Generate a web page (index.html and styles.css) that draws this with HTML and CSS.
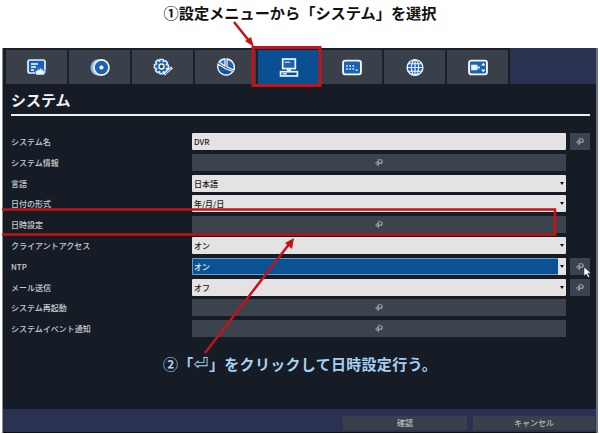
FILE: index.html
```html
<!DOCTYPE html>
<html lang="ja">

<head>
  <meta charset="UTF-8">
  <title>システム</title>
  <link rel="stylesheet" href="styles.css">
</head>

<body>
  <svg width="0" height="0" class="defs">
    <symbol id="enter" viewBox="0 0 12 10">
      <path d="M10.5 1.5V6H4" fill="none" stroke="currentColor" stroke-width="1.3"/>
      <path d="M5 2.5 1 6l4 3.5z" fill="none" stroke="currentColor" stroke-width="1.1"/>
      <path d="M4 1h6" fill="none" stroke="currentColor" stroke-width="1"/>
    </symbol>
  </svg>

  <h2 class="caption">①設定メニューから「システム」を選択</h2>

  <div class="app">
    <div class="tabs">
      <div class="tab">
        <svg class="icon" viewBox="0 0 20 17">
          <rect x="1" y="1" width="17" height="13" rx="2" fill="#1a62b8" stroke="#e6f0fa" stroke-width="1.7"/>
          <path d="M4 5h7M4 8h5M4 11h3" stroke="#fff" stroke-width="1.3"/>
          <path d="M9 16l-1-5 2 1 1-4 1 3 1.500-3 1 3 1.500-2 .5 3 2.500-1-2 5z" fill="#eaf3fb" stroke="#1a4f90" stroke-width=".5"/>
        </svg>
      </div>
      <div class="tab">
        <svg class="icon" viewBox="0 0 21 18">
          <circle cx="9" cy="9" r="8.600" fill="#8fb6e0"/>
          <circle cx="12" cy="9" r="8.800" fill="#f0f6fc"/>
          <circle cx="12" cy="9" r="7" fill="#1a62b8"/>
          <circle cx="12" cy="9" r="2.200" fill="#fff"/>
        </svg>
      </div>
      <div class="tab">
        <svg class="icon" viewBox="0 0 20 18">
          <path d="M7 1h3l.5 2 2-.8 2 2-1 1.800 2 .8v3l-2 .5.8 2-2 2-1.800-1-.8 2H7l-.5-2-2 .8-2-2 1-1.800-2-.8V6l2-.5-.8-2 2-2 1.800 1z" fill="#1a62b8" stroke="#dcebf8" stroke-width="1.600"/>
          <circle cx="8.500" cy="8" r="2.500" fill="#3a4049" stroke="#eaf3fb" stroke-width="1.400"/>
          <path d="M11 16l8-7" stroke="#f0f6fc" stroke-width="2.600"/>
          <path d="M12 15.500l6-5.500" stroke="#1a62b8" stroke-width="1"/>
        </svg>
      </div>
      <div class="tab">
        <svg class="icon" viewBox="0 0 20 19">
          <path d="M9 1A8 8 0 0 0 3 4l6 4z" fill="#2a78cc" stroke="#f0f6fc" stroke-width="1.300"/>
          <path d="M11 1v8l7 3a8.500 8.500 0 0 0-7-11z" fill="#1a62b8" stroke="#f0f6fc" stroke-width="1.300"/>
          <path d="M2 6l8 5 7 2.500A8.500 8.500 0 0 1 2 6z" fill="#14559f" stroke="#f0f6fc" stroke-width="1.300"/>
        </svg>
      </div>
      <div class="tab active">
        <svg class="icon" viewBox="0 0 18 18">
          <rect x="3" y="1" width="12" height="9" fill="#1a62b8" stroke="#eef5fb" stroke-width="1.600"/>
          <path d="M5 4h5" stroke="#eef5fb"/>
          <path d="M7 10.500v2h4v-2" fill="#eef5fb"/>
          <rect x="1" y="13" width="16" height="4" fill="#0b4f93" stroke="#eef5fb" stroke-width="1.600"/>
          <path d="M3 15h4" stroke="#eef5fb" stroke-width="1.300"/>
        </svg>
      </div>
      <div class="tab">
        <svg class="icon" viewBox="0 0 19 15">
          <rect x="1" y="1" width="17" height="13" rx="2" fill="#1a62b8" stroke="#f0f6fc" stroke-width="1.800"/>
          <path d="M4 6h1.500M7 6h1.500M10 6h1.500M4 9h1.500M7 9h1.500M10 9h1.500M13 10h2" stroke="#fff" stroke-width="1.400"/>
        </svg>
      </div>
      <div class="tab">
        <svg class="icon" viewBox="0 0 18 20">
          <circle cx="9" cy="10" r="8.300" fill="#1a62b8" stroke="#f0f6fc" stroke-width="1.500"/>
          <ellipse cx="9" cy="10" rx="3.800" ry="8.300" fill="none" stroke="#f0f6fc" stroke-width="1.200"/>
          <path d="M9 2v16M1 10h16M2 6h14M2 14h14" stroke="#f0f6fc" stroke-width="1.200"/>
        </svg>
      </div>
      <div class="tab">
        <svg class="icon" viewBox="0 0 19 15">
          <rect x="1" y="1" width="17" height="13" rx="2" fill="#1a62b8" stroke="#f0f6fc" stroke-width="1.800"/>
          <path d="M3 5h6v5H3zM9 7l2-1v3l-2-1z" fill="#eaf3fb"/>
          <path d="M14.500 3l-2 2.500h4zM14.500 12l-2-2.500h4z" fill="#fff"/>
        </svg>
      </div>
      <div class="tab-rest"></div>
    </div>

    <div class="panel">
      <h1 class="title">システム</h1>

      <div class="rows">
        <span class="label">システム名</span>
        <div class="field">DVR</div>
        <button class="side"><svg class="enter"><use href="#enter"/></svg></button>

        <span class="label">システム情報</span>
        <button class="wide"><svg class="enter"><use href="#enter"/></svg></button>
        <span></span>

        <span class="label">言語</span>
        <div class="field select">日本語</div>
        <span></span>

        <span class="label">日付の形式</span>
        <div class="field select">年/月/日</div>
        <span></span>

        <span class="label">日時設定</span>
        <button class="wide"><svg class="enter"><use href="#enter"/></svg></button>
        <span></span>

        <span class="label">クライアントアクセス</span>
        <div class="field select">オン</div>
        <span></span>

        <span class="label">NTP</span>
        <div class="field select focus">オン</div>
        <button class="side"><svg class="enter"><use href="#enter"/></svg></button>

        <span class="label">メール送信</span>
        <div class="field select">オフ</div>
        <button class="side"><svg class="enter"><use href="#enter"/></svg></button>

        <span class="label">システム再起動</span>
        <button class="wide"><svg class="enter"><use href="#enter"/></svg></button>
        <span></span>

        <span class="label">システムイベント通知</span>
        <button class="wide"><svg class="enter"><use href="#enter"/></svg></button>
        <span></span>
      </div>

      <p class="note">②「<span class="note-key">⏎</span>」をクリックして日時設定行う。</p>
    </div>

    <div class="footer">
      <button class="foot-btn ok">確認</button>
      <button class="foot-btn cancel">キャンセル</button>
    </div>
  </div>

  <!-- red marks drawn on top of the screenshot -->
  <svg class="marks" width="600" height="434" viewBox="0 0 600 434">
    <rect x="253" y="47.500" width="67" height="38" fill="none" stroke="#c2141a" stroke-width="3"/>
    <path d="M2 209.500H555V234.500H2" fill="none" stroke="#c2141a" stroke-width="2.500"/>
    <path d="M234 22 250 42" stroke="#c2141a" stroke-width="2.500"/>
    <path d="M254 47 245 41 251 37z" fill="#c2141a"/>
    <path d="M205 353 290 243" stroke="#c2141a" stroke-width="2.500"/>
    <path d="M294 238 292 249 285 243z" fill="#c2141a"/>
    <path d="M584 267v9l2.200-2 2 3.500 1.500-.8-2-3.400 3-.4z" fill="#fff" stroke="#222" stroke-width=".5"/>
  </svg>
</body>

</html>
```

FILE: styles.css
```css
body {
  margin: 0;
  width: 600px;
  height: 434px;
  overflow: hidden;
  background-color: white;
  font-family: "Noto Sans CJK JP", "Noto Sans", sans-serif;
  position: relative;
}

button {
  font-family: inherit;
  padding: 0;
  border: none;
}

.defs {
  position: absolute;
}

.caption {
  margin: 0;
  height: 48px;
  box-sizing: border-box;
  padding-top: 1px;
  line-height: 22px;
  font-size: 15.2px;
  font-weight: 700;
  text-align: center;
  color: #111;
}

.app {
  margin: 0 2px;
  height: 385px;
  display: flex;
  flex-direction: column;
  background-color: #2b3150;
  border-right: 2px solid #6c7078;
  box-sizing: border-box;
  border-left: 1px solid #8b8f96;
}

.tabs {
  display: flex;
  height: 36px;
  flex-shrink: 0;
  gap: 2px;
  padding: 2px 0 0 3px;
  box-sizing: border-box;
  background-color: #1b1f2a;
}

.tab {
  width: 61px;
  display: flex;
  align-items: center;
  justify-content: center;
  background-color: #3a4049;
}

.tab.active {
  background-color: #0b4f93;
}

.tab-rest {
  flex: 1;
  margin: -2px 0 0 0;
  background-color: #2b3150;
}

.icon {
  width: 20px;
  height: 19px;
}

.panel {
  flex: 1;
  background-color: #161c25;
  padding: 0 6px 0 8px;
}

.title {
  margin: 0 0 17px;
  padding: 5px 0 3px 0;
  height: 22px;
  line-height: 22px;
  font-size: 15px;
  font-weight: 700;
  color: #f2f2f2;
  border-bottom: 2px solid #f0f0f0;
}

.rows {
  display: grid;
  grid-template-columns: 181px 374px 20px;
  column-gap: 0;
  grid-auto-rows: 17px;
  row-gap: 3.8px;
  width: 590px;
}

.rows > .side {
  margin-left: 4px;
  width: 20px;
}

.label {
  font-size: 8px;
  font-weight: 500;
  line-height: 17px;
  color: #c8ccd0;
}

.field {
  font-size: 8px;
  font-weight: 500;
  line-height: 17px;
  padding-left: 2px;
  color: #1a1a1a;
  background-color: #e4e2e3;
  border-radius: 1px;
  position: relative;
}

.select::after {
  content: "";
  position: absolute;
  right: 2px;
  top: 7px;
  border-left: 2.500px solid transparent;
  border-right: 2.500px solid transparent;
  border-top: 3px solid #111;
}

.focus {
  background-color: #0a5293;
  color: #e8eef5;
  box-shadow: inset 0 0 0 1px #6d9cc6;
}

.focus::before {
  content: "";
  position: absolute;
  right: 0;
  top: 0;
  width: 8px;
  height: 100%;
  background-color: #e4e2e3;
}

.focus::after {
  z-index: 1;
}

.wide,
.side {
  display: flex;
  align-items: center;
  justify-content: center;
  background-color: #3b444e;
  color: #c9ced3;
}

.enter {
  width: 8px;
  height: 7px;
}

.note {
  margin: 16px 0 0 152px;
  font-size: 15px;
  line-height: 22px;
  font-weight: 700;
  letter-spacing: 0.3px;
  color: #a8d0f0;
}

.note-key {
  font-family: "DejaVu Sans", sans-serif;
  font-size: 18px;
  line-height: 1;
  font-weight: 400;
}

.footer {
  height: 24px;
  flex-shrink: 0;
  display: flex;
  gap: 6px;
  justify-content: flex-end;
  padding: 7px 1px 2px 0;
  box-sizing: border-box;
  background-color: #2b3150;
  border-bottom: 1px solid #0e1118;
}

.foot-btn {
  height: 14px;
  font-size: 8px;
  line-height: 14px;
  background-color: #3a4049;
  color: #d0d3d6;
}

.ok {
  width: 124px;
}

.cancel {
  width: 122px;
}

.marks {
  position: absolute;
  left: 0;
  top: 0;
}
```
